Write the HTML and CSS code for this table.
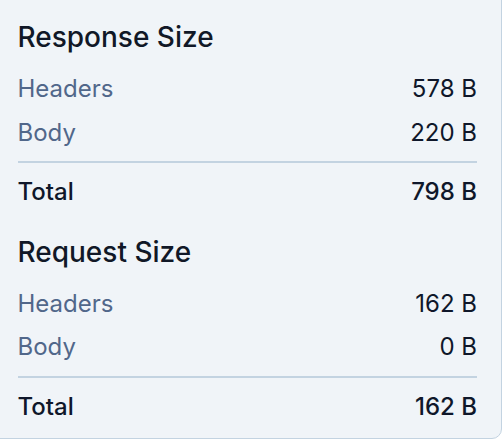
FILE: index.html
```html
<!DOCTYPE html>
<html>
<head>
<meta charset="utf-8">
<link rel="stylesheet" href="styles.css">
</head>
<body>
<div class="card">
  <section class="group">
    <h2 class="title">Response Size</h2>
    <div class="row"><span class="label">Headers</span><span class="value">578 B</span></div>
    <div class="row"><span class="label">Body</span><span class="value">220 B</span></div>
    <div class="row total"><span class="label">Total</span><span class="value">798 B</span></div>
  </section>
  <section class="group">
    <h2 class="title">Request Size</h2>
    <div class="row"><span class="label">Headers</span><span class="value">162 B</span></div>
    <div class="row"><span class="label">Body</span><span class="value">0 B</span></div>
    <div class="row total"><span class="label">Total</span><span class="value">162 B</span></div>
  </section>
</div>
</body>
</html>
```
FILE: styles.css
```css
html, body {
  margin: 0;
  padding: 0;
  background: #ffffff;
  width: 504px;
  height: 440px;
  overflow: hidden;
}
body {
  font-family: Inter, "Noto Sans", sans-serif;
}
.card {
  box-sizing: border-box;
  margin: -12px 2px 0 -12px;
  height: 451px;
  background: #f0f4f8;
  border: 1.5px solid #c3d3e1;
  border-radius: 10px;
  padding: 30px 24px 0 28.5px;
  display: flex;
  flex-direction: column;
  gap: 20px;
}
.title {
  margin: 0 0 12px 0;
  font-size: 28px;
  font-weight: 500;
  color: #111827;
  line-height: 36px;
}
.row {
  display: flex;
  justify-content: space-between;
  height: 43.5px;
  line-height: 43px;
  font-size: 24px;
  color: #0f172a;
}
.label {
  color: #51678a;
}
.row.total {
  margin-top: 7px;
  border-top: 2px solid #c3d3e1;
  padding-top: 7px;
}
.row.total .label {
  color: #0f172a;
  font-weight: 500;
}
.row.total .value {
  font-weight: 500;
}
```
